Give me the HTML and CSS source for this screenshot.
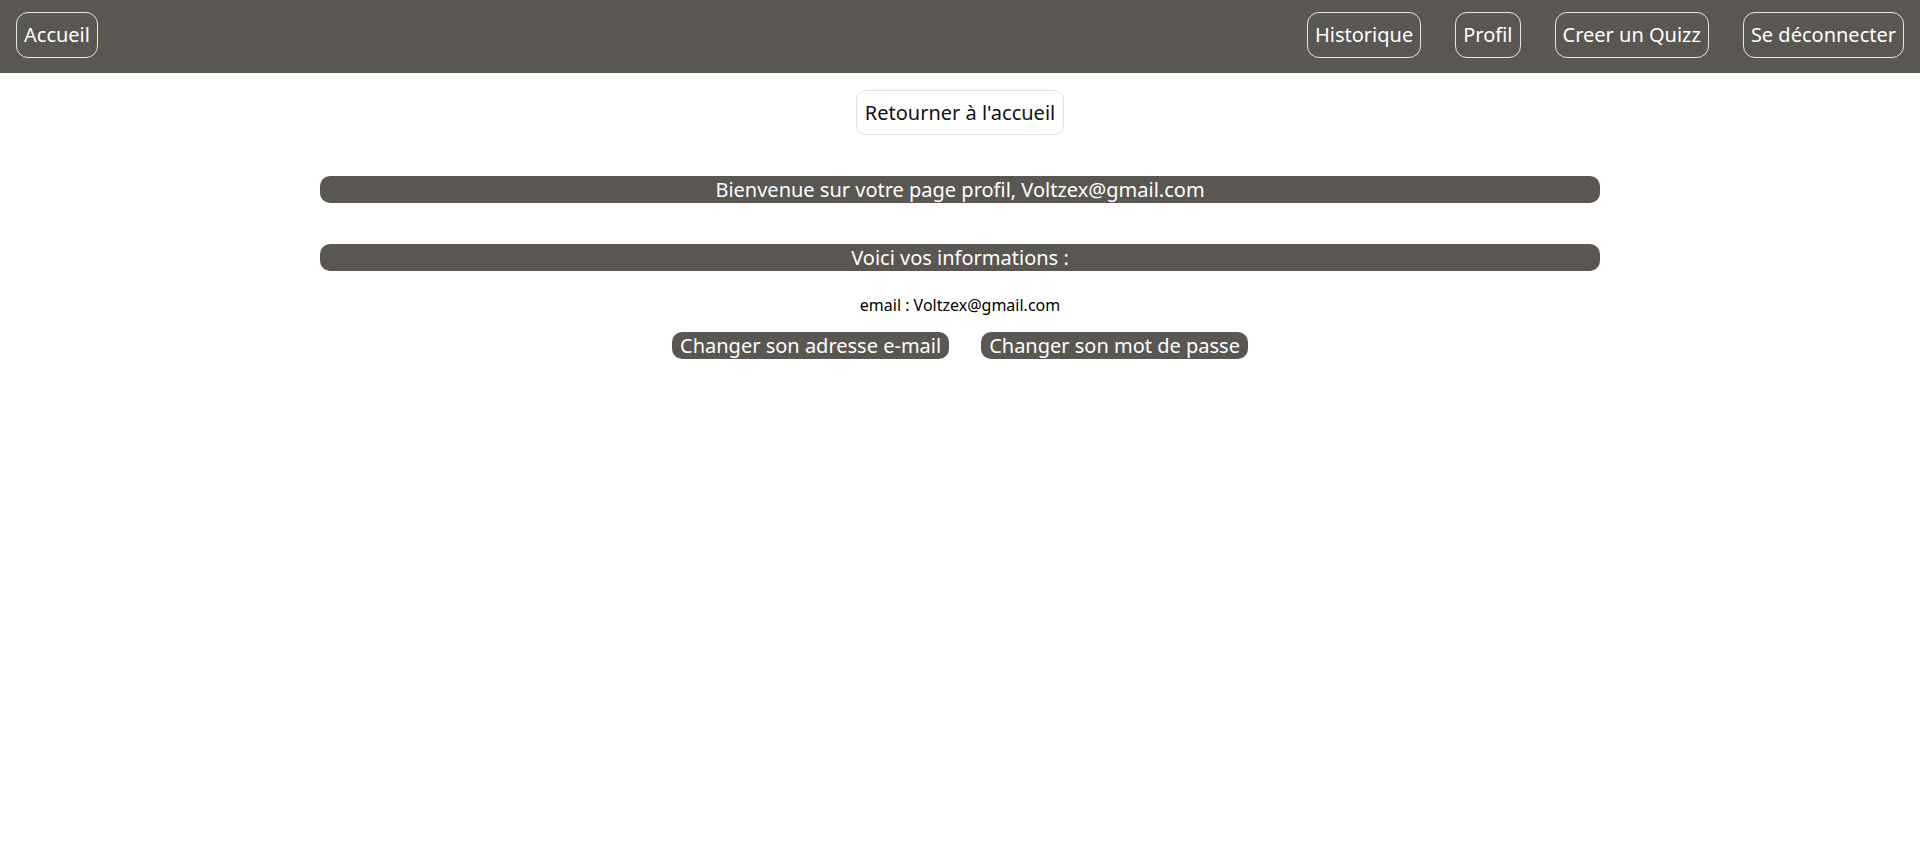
FILE: index.html
```html
<!DOCTYPE html>
<html lang="fr">
<head>
<meta charset="utf-8">
<title>Profil</title>
<link rel="stylesheet" href="styles.css">
</head>
<body>
<header class="topbar">
  <button class="nav-btn">Accueil</button>
  <nav class="nav-right">
    <button class="nav-btn">Historique</button>
    <button class="nav-btn">Profil</button>
    <button class="nav-btn">Creer un Quizz</button>
    <button class="nav-btn">Se déconnecter</button>
  </nav>
</header>
<main class="content">
  <button class="back-btn">Retourner à l'accueil</button>
  <h1 class="banner">Bienvenue sur votre page profil, Voltzex@gmail.com</h1>
  <h2 class="banner">Voici vos informations :</h2>
  <p class="email">email : Voltzex@gmail.com</p>
  <div class="actions">
    <button class="pill-btn">Changer son adresse e-mail</button>
    <button class="pill-btn">Changer son mot de passe</button>
  </div>
</main>
</body>
</html>
```

FILE: styles.css
```css
* { box-sizing: border-box; }
html, body {
  margin: 0;
  padding: 0;
  background: #ffffff;
  font-family: "Noto Sans", "Open Sans", sans-serif;
}
.topbar {
  height: 73px;
  background: #5a5651;
  display: flex;
  align-items: flex-start;
  justify-content: space-between;
  padding: 12px 16px 0;
}
.nav-right {
  display: flex;
  gap: 34px;
}
.nav-btn {
  font-family: inherit;
  font-size: 20px;
  line-height: 28px;
  color: #ffffff;
  background: transparent;
  border: 1px solid #e6e6e6;
  border-radius: 12px;
  padding: 8px 7px;
  cursor: pointer;
}
.content {
  display: flex;
  flex-direction: column;
  align-items: center;
}
.back-btn {
  margin-top: 17px;
  font-family: inherit;
  font-size: 20px;
  line-height: 27px;
  color: #111111;
  background: #ffffff;
  border: 1px solid #e2e2e2;
  border-radius: 10px;
  padding: 8px 8px;
}
.banner {
  width: 1280px;
  margin: 41px 0 0;
  background: #5a5651;
  color: #ffffff;
  border-radius: 10px;
  text-align: center;
  font-size: 20px;
  font-weight: normal;
  line-height: 27px;
}
.email {
  margin: 23px 0 0;
  font-size: 16px;
  line-height: 22px;
  color: #000000;
}
.actions {
  display: flex;
  gap: 32px;
  margin-top: 16px;
}
.pill-btn {
  font-family: inherit;
  font-size: 20px;
  line-height: 27px;
  color: #ffffff;
  background: #5a5651;
  border: none;
  border-radius: 10px;
  padding: 0 8px;
}
```
